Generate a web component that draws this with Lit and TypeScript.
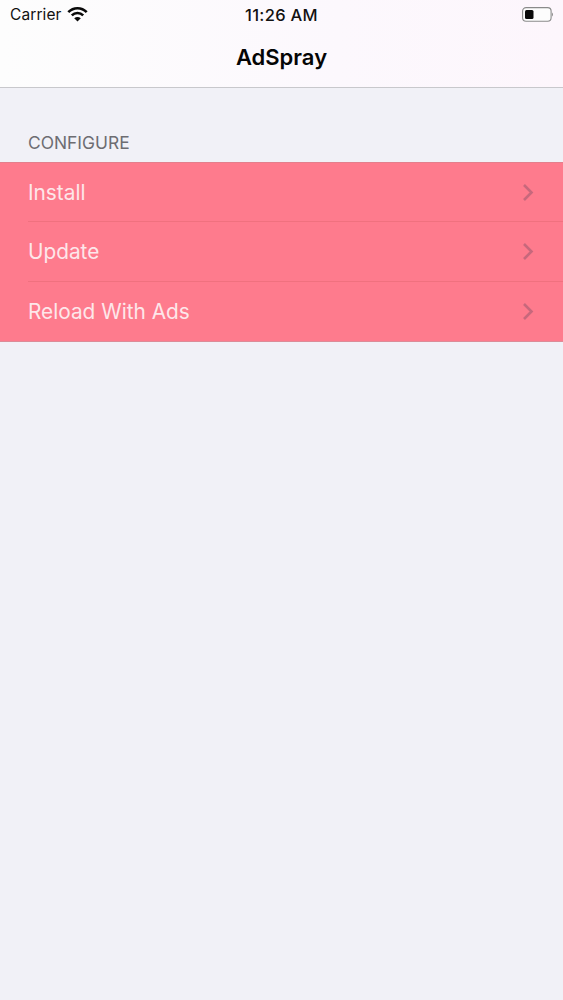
import { LitElement, html, css } from "lit";
import { customElement } from "lit/decorators.js";

@customElement("app-root")
export class AppRoot extends LitElement {
  static styles = css`
    :host {
      display: block;
      width: 563px;
      height: 1000px;
      background: #f1f1f7;
      font-family: Inter, "Liberation Sans", sans-serif;
      overflow: hidden;
    }
    .top {
      height: 88px;
      box-sizing: border-box;
      background: linear-gradient(90deg, #fdfdfd 0%, #fcf8fd 60%, #fdf6fc 100%);
      border-bottom: 1px solid #c8c8cc;
      display: flex;
      flex-direction: column;
    }
    .status {
      height: 29px;
      display: grid;
      grid-template-columns: 1fr auto 1fr;
      align-items: center;
      padding: 0 10px;
      font-size: 15.5px;
      color: #111;
    }
    .left { display: flex; align-items: center; gap: 6px; }
    .left span { font-weight: 400; letter-spacing: 0.1px; }
    .left svg { margin-left: -1px; margin-top: -2px; }
    .time { font-weight: 500; font-size: 16.5px; letter-spacing: 0.3px; }
    .right { display: flex; justify-content: flex-end; margin-right: 0; }
    .title {
      flex: 1;
      display: flex;
      align-items: center;
      justify-content: center;
      font-size: 22px;
      font-weight: 600;
      color: #050505;
      padding-bottom: 3px;
    }
    .section {
      padding: 45px 28px 9px;
      font-size: 17.4px;
      line-height: 20px;
      color: #6d6d72;
    }
    .list {
      background: #fe7b8d;
      border-top: 1px solid #e47f8c;
      border-bottom: 1px solid #dc8c98;
    }
    .row {
      height: 59.3px;
      box-sizing: border-box;
      margin-left: 28px;
      padding-right: 29px;
      display: flex;
      align-items: center;
      justify-content: space-between;
      color: #fde7ea;
      font-size: 20.8px;
      border-bottom: 1px solid #f0717f;
    }
    .row:last-child { border-bottom: none; }
    svg { display: block; }
  `;

  render() {
    const rows = ["Install", "Update", "Reload With Ads"];
    return html`
      <div class="top">
        <div class="status">
          <div class="left">
            <span>Carrier</span>
            <svg width="21" height="16" viewBox="0 0 21 16" fill="none" stroke="#0a0a0a" stroke-linecap="butt">
              <path d="M1.3 6.2 C6.5 0.9 14.5 0.9 19.7 6.2" stroke-width="2.6"/>
              <path d="M4.8 9.4 C8 6.2 13 6.2 16.2 9.4" stroke-width="2.6"/>
              <path d="M10.5 15.6 L7.2 12.2 C9.2 10.5 11.8 10.5 13.8 12.2 Z" fill="#0a0a0a" stroke="none"/>
            </svg>
          </div>
          <div class="time">11:26 AM</div>
          <div class="right">
            <svg width="32" height="15" viewBox="0 0 32 15" fill="none">
              <rect x="1.6" y="0.6" width="28.5" height="13.6" rx="3.5" stroke="#8a8a8a" stroke-width="1.1" fill="#fdfdfd"/>
              <rect x="4" y="3" width="8.5" height="9" rx="1.5" fill="#0a0a0a"/>
              <path d="M31 5.4 C31.6 5.8 31.9 6.4 31.9 7.4 C31.9 8.4 31.6 9 31 9.4 Z" fill="#8a8a8a"/>
            </svg>
          </div>
        </div>
        <div class="title">AdSpray</div>
      </div>
      <div class="section">CONFIGURE</div>
      <div class="list">
        ${rows.map(
          (r) => html`<div class="row">
            <span>${r}</span>
            <svg width="12" height="19" viewBox="0 0 12 19" fill="none">
              <path d="M2 2 L9.5 9.5 L2 17" stroke="#c7687c" stroke-width="2.6"/>
            </svg>
          </div>`
        )}
      </div>
    `;
  }
}
